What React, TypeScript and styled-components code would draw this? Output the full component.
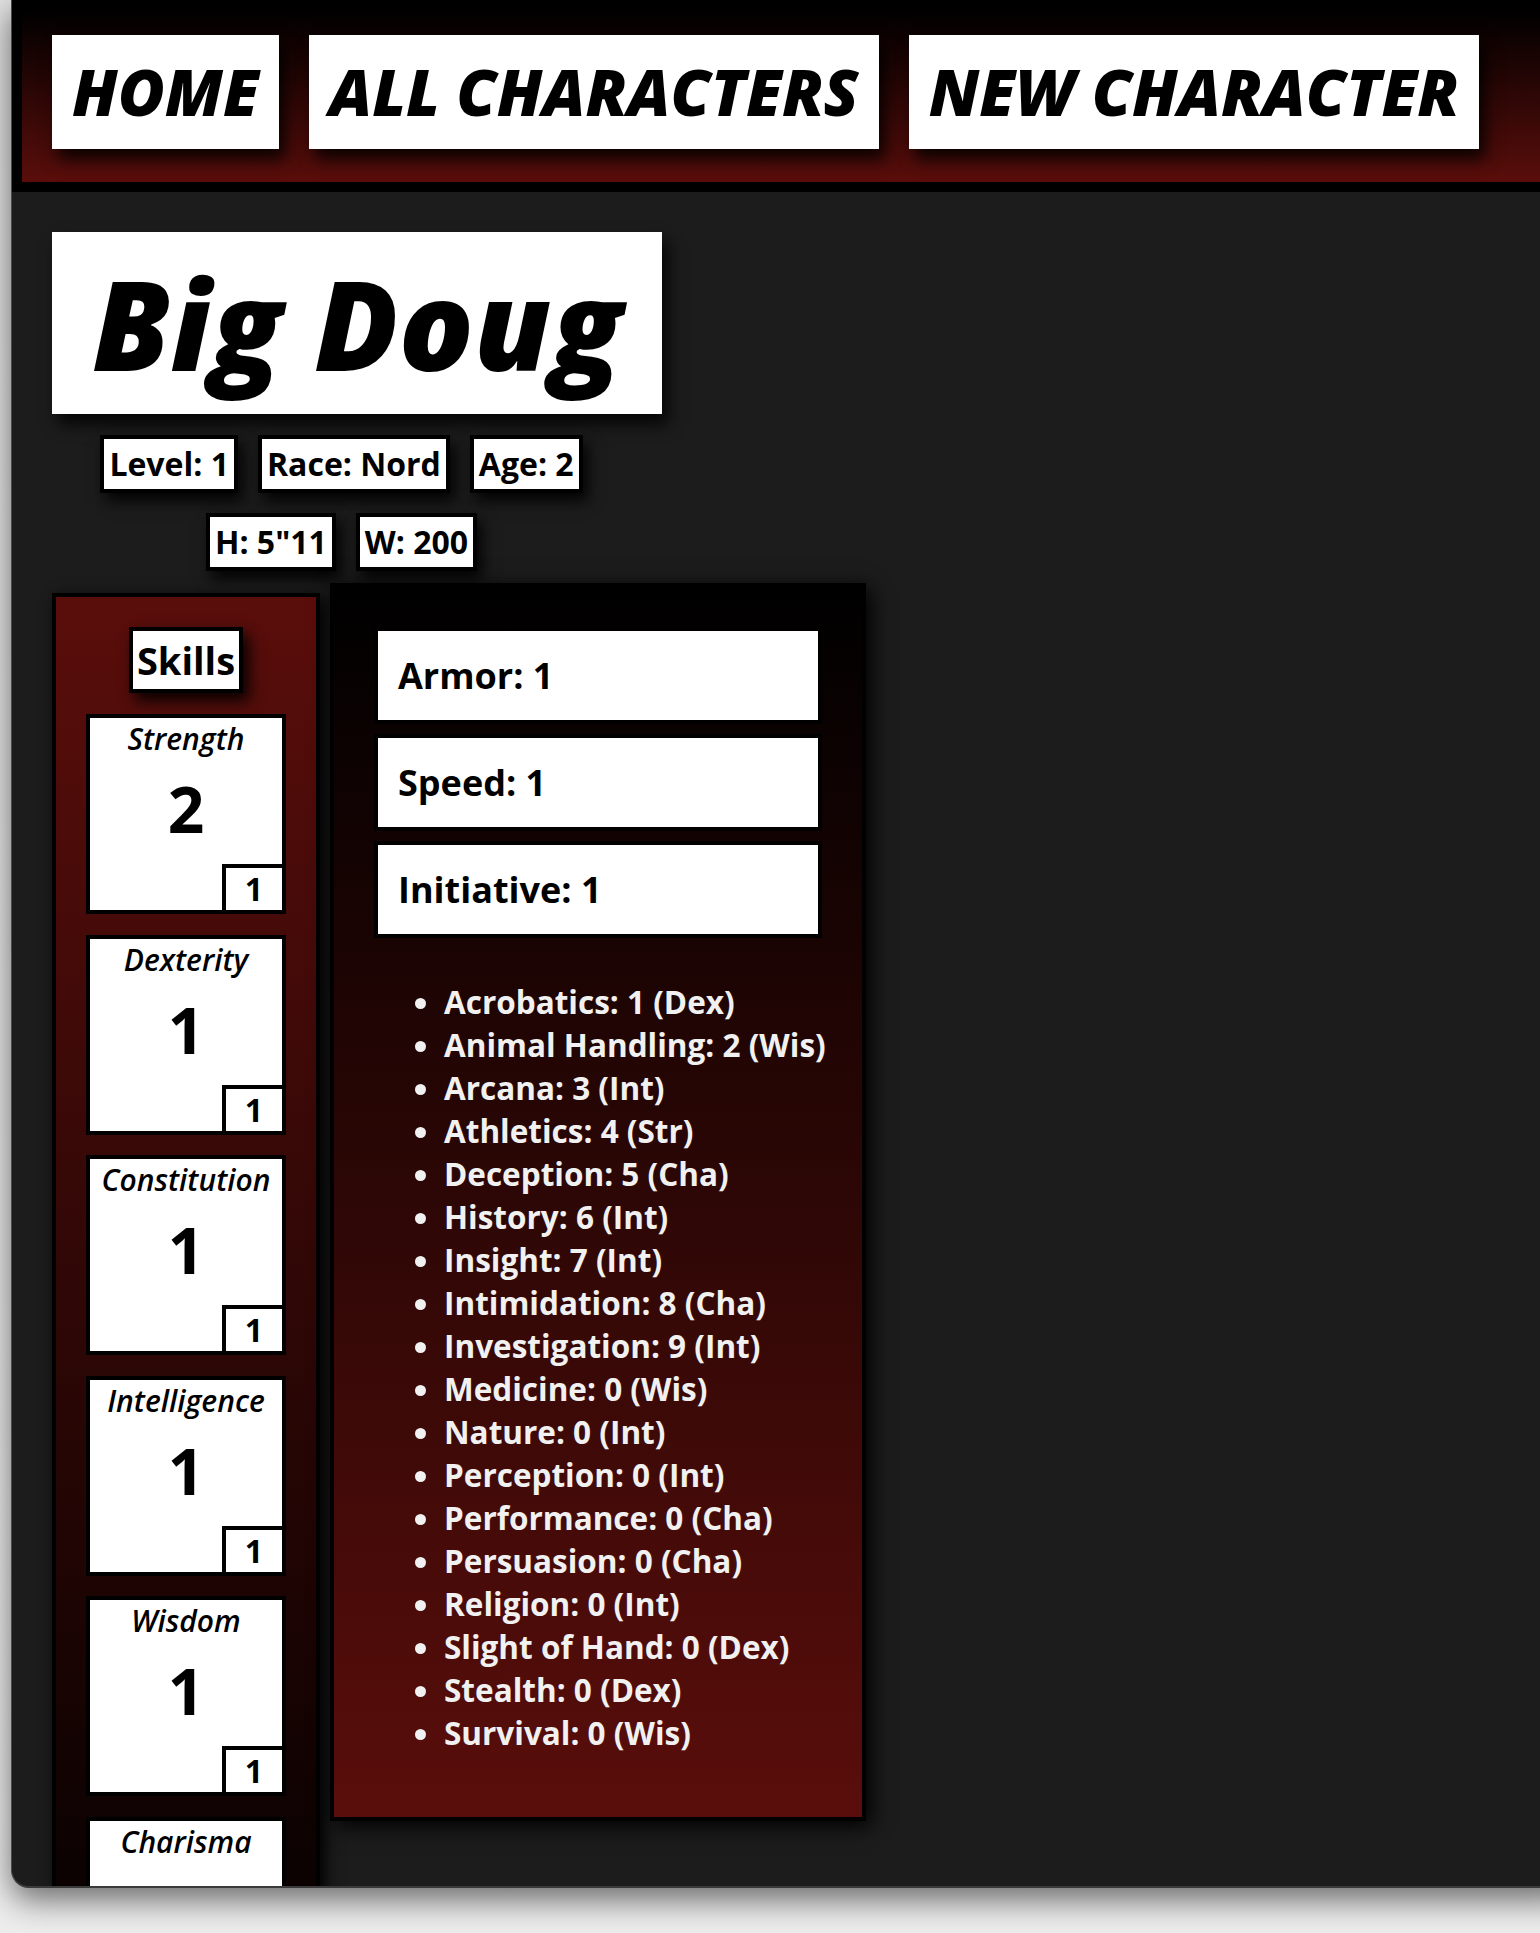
import React from "react";
import styled, { createGlobalStyle } from "styled-components";

const RED = "#5a0e0b";

const GlobalStyle = createGlobalStyle`
  html { overflow: hidden; }
  body {
    margin: 0;
    padding: 0;
    background: #ebebeb;
    font-family: "Open Sans", "DejaVu Sans", sans-serif;
    color: #000;
  }
`;

const Desktop = styled.div`
  height: 1933px;
  overflow: hidden;
  background: linear-gradient(to bottom, #e2e2e2, #ededed);
`;

const Window = styled.div`
  margin-left: 11px;
  width: 1560px;
  height: 1888px;
  box-sizing: border-box;
  background: #1c1c1c;
  border-left: 1px solid #4a4a4a;
  border-bottom: 2px solid #3a3a3a;
  border-bottom-left-radius: 18px;
  overflow: hidden;
  box-shadow: 0 12px 32px rgba(0, 0, 0, 0.55);
`;

const Header = styled.nav`
  display: flex;
  gap: 30px;
  padding: 25px 30px 33px;
  border: 10px solid #000;
  background: linear-gradient(to bottom, #000, ${RED});
`;

const NavButton = styled.a`
  display: block;
  flex: none;
  white-space: nowrap;
  background: #fff;
  color: #000;
  font-size: 64px;
  font-weight: 800;
  font-style: italic;
  line-height: 92px;
  padding: 11px 20px;
  text-transform: uppercase;
  text-decoration: none;
  box-shadow: 6px 10px 15px rgba(0, 0, 0, 0.85);
`;

const Main = styled.main`
  display: flex;
  flex-direction: column;
  align-items: flex-start;
  padding: 40px;
`;

const TitleBox = styled.h1`
  margin: 0;
  white-space: nowrap;
  background: #fff;
  font-size: 124px;
  font-weight: 800;
  font-style: italic;
  line-height: 178px;
  padding: 2px 40px;
  box-shadow: 6px 10px 15px rgba(0, 0, 0, 0.85);
`;

const ChipArea = styled.div`
  width: 579px;
  display: flex;
  flex-direction: column;
  align-items: center;
  gap: 20px;
  margin-top: 21px;
`;

const ChipRow = styled.div`
  display: flex;
  gap: 20px;
`;

const Chip = styled.div`
  white-space: nowrap;
  background: #fff;
  border: 4px solid #000;
  font-size: 32px;
  font-weight: 700;
  line-height: 44px;
  padding: 3px 5px;
  box-shadow: 5px 8px 14px rgba(0, 0, 0, 0.9);
`;

const Columns = styled.div`
  display: flex;
  align-items: flex-start;
  gap: 10px;
  margin-top: 12px;
`;

const SkillsPanel = styled.section`
  margin-top: 10px;
  width: 200px;
  padding: 30px;
  border: 4px solid #000;
  background: linear-gradient(to bottom, ${RED}, #000);
  display: flex;
  flex-direction: column;
  align-items: center;
  box-shadow: 5px 5px 15px #000;
`;

const SkillsTitle = styled.h2`
  margin: 0 0 21px;
  background: #fff;
  border: 4px solid #000;
  font-size: 38px;
  font-weight: 700;
  line-height: 54px;
  padding: 2px 4px;
  box-shadow: 6px 8px 14px rgba(0, 0, 0, 0.9);
`;

const Card = styled.div`
  position: relative;
  box-sizing: border-box;
  width: 200px;
  height: 200px;
  margin-bottom: 20.5px;
  padding-top: 2px;
  background: #fff;
  border: 4px solid #000;
  text-align: center;
`;

const CardLabel = styled.div`
  font-size: 30px;
  font-weight: 600;
  font-style: italic;
  line-height: 38px;
  white-space: nowrap;
`;

const CardScore = styled.div`
  margin-top: 7px;
  font-size: 64px;
  font-weight: 700;
  line-height: 87px;
`;

const Modifier = styled.div`
  position: absolute;
  right: -4px;
  bottom: -4px;
  width: 56px;
  height: 42px;
  background: #fff;
  border: 4px solid #000;
  font-size: 32px;
  font-weight: 700;
  line-height: 42px;
  text-align: center;
`;

const StatsPanel = styled.section`
  width: 448px;
  padding: 40px;
  border: 4px solid #000;
  background: linear-gradient(to bottom, #000, ${RED});
  box-shadow: 5px 5px 20px #000;
`;

const StatBox = styled.div`
  background: #fff;
  border: 4px solid #000;
  font-size: 36px;
  font-weight: 700;
  line-height: 49px;
  padding: 20px;
  margin-bottom: 10px;
`;

const SkillList = styled.ul`
  margin: 42px 0 23px;
  padding-left: 70px;
  color: #f1f1f1;
  font-size: 31.5px;
  font-weight: 700;
  white-space: nowrap;
`;

const abilities: [string, number, number][] = [
  ["Strength", 2, 1],
  ["Dexterity", 1, 1],
  ["Constitution", 1, 1],
  ["Intelligence", 1, 1],
  ["Wisdom", 1, 1],
  ["Charisma", 1, 1],
];

const proficiencies = [
  "Acrobatics: 1 (Dex)",
  "Animal Handling: 2 (Wis)",
  "Arcana: 3 (Int)",
  "Athletics: 4 (Str)",
  "Deception: 5 (Cha)",
  "History: 6 (Int)",
  "Insight: 7 (Int)",
  "Intimidation: 8 (Cha)",
  "Investigation: 9 (Int)",
  "Medicine: 0 (Wis)",
  "Nature: 0 (Int)",
  "Perception: 0 (Int)",
  "Performance: 0 (Cha)",
  "Persuasion: 0 (Cha)",
  "Religion: 0 (Int)",
  "Slight of Hand: 0 (Dex)",
  "Stealth: 0 (Dex)",
  "Survival: 0 (Wis)",
];

export default function App() {
  return (
    <Desktop>
      <GlobalStyle />
      <Window>
        <Header>
          <NavButton href="#">Home</NavButton>
          <NavButton href="#">All Characters</NavButton>
          <NavButton href="#">New Character</NavButton>
        </Header>
        <Main>
          <TitleBox>Big Doug</TitleBox>
          <ChipArea>
            <ChipRow>
              <Chip>Level: 1</Chip>
              <Chip>Race: Nord</Chip>
              <Chip>Age: 2</Chip>
            </ChipRow>
            <ChipRow>
              <Chip>H: 5"11</Chip>
              <Chip>W: 200</Chip>
            </ChipRow>
          </ChipArea>
          <Columns>
            <SkillsPanel>
              <SkillsTitle>Skills</SkillsTitle>
              {abilities.map(([name, score, mod]) => (
                <Card key={name}>
                  <CardLabel>{name}</CardLabel>
                  <CardScore>{score}</CardScore>
                  <Modifier>{mod}</Modifier>
                </Card>
              ))}
            </SkillsPanel>
            <StatsPanel>
              <StatBox>Armor: 1</StatBox>
              <StatBox>Speed: 1</StatBox>
              <StatBox>Initiative: 1</StatBox>
              <SkillList>
                {proficiencies.map((p) => (
                  <li key={p}>{p}</li>
                ))}
              </SkillList>
            </StatsPanel>
          </Columns>
        </Main>
      </Window>
    </Desktop>
  );
}
